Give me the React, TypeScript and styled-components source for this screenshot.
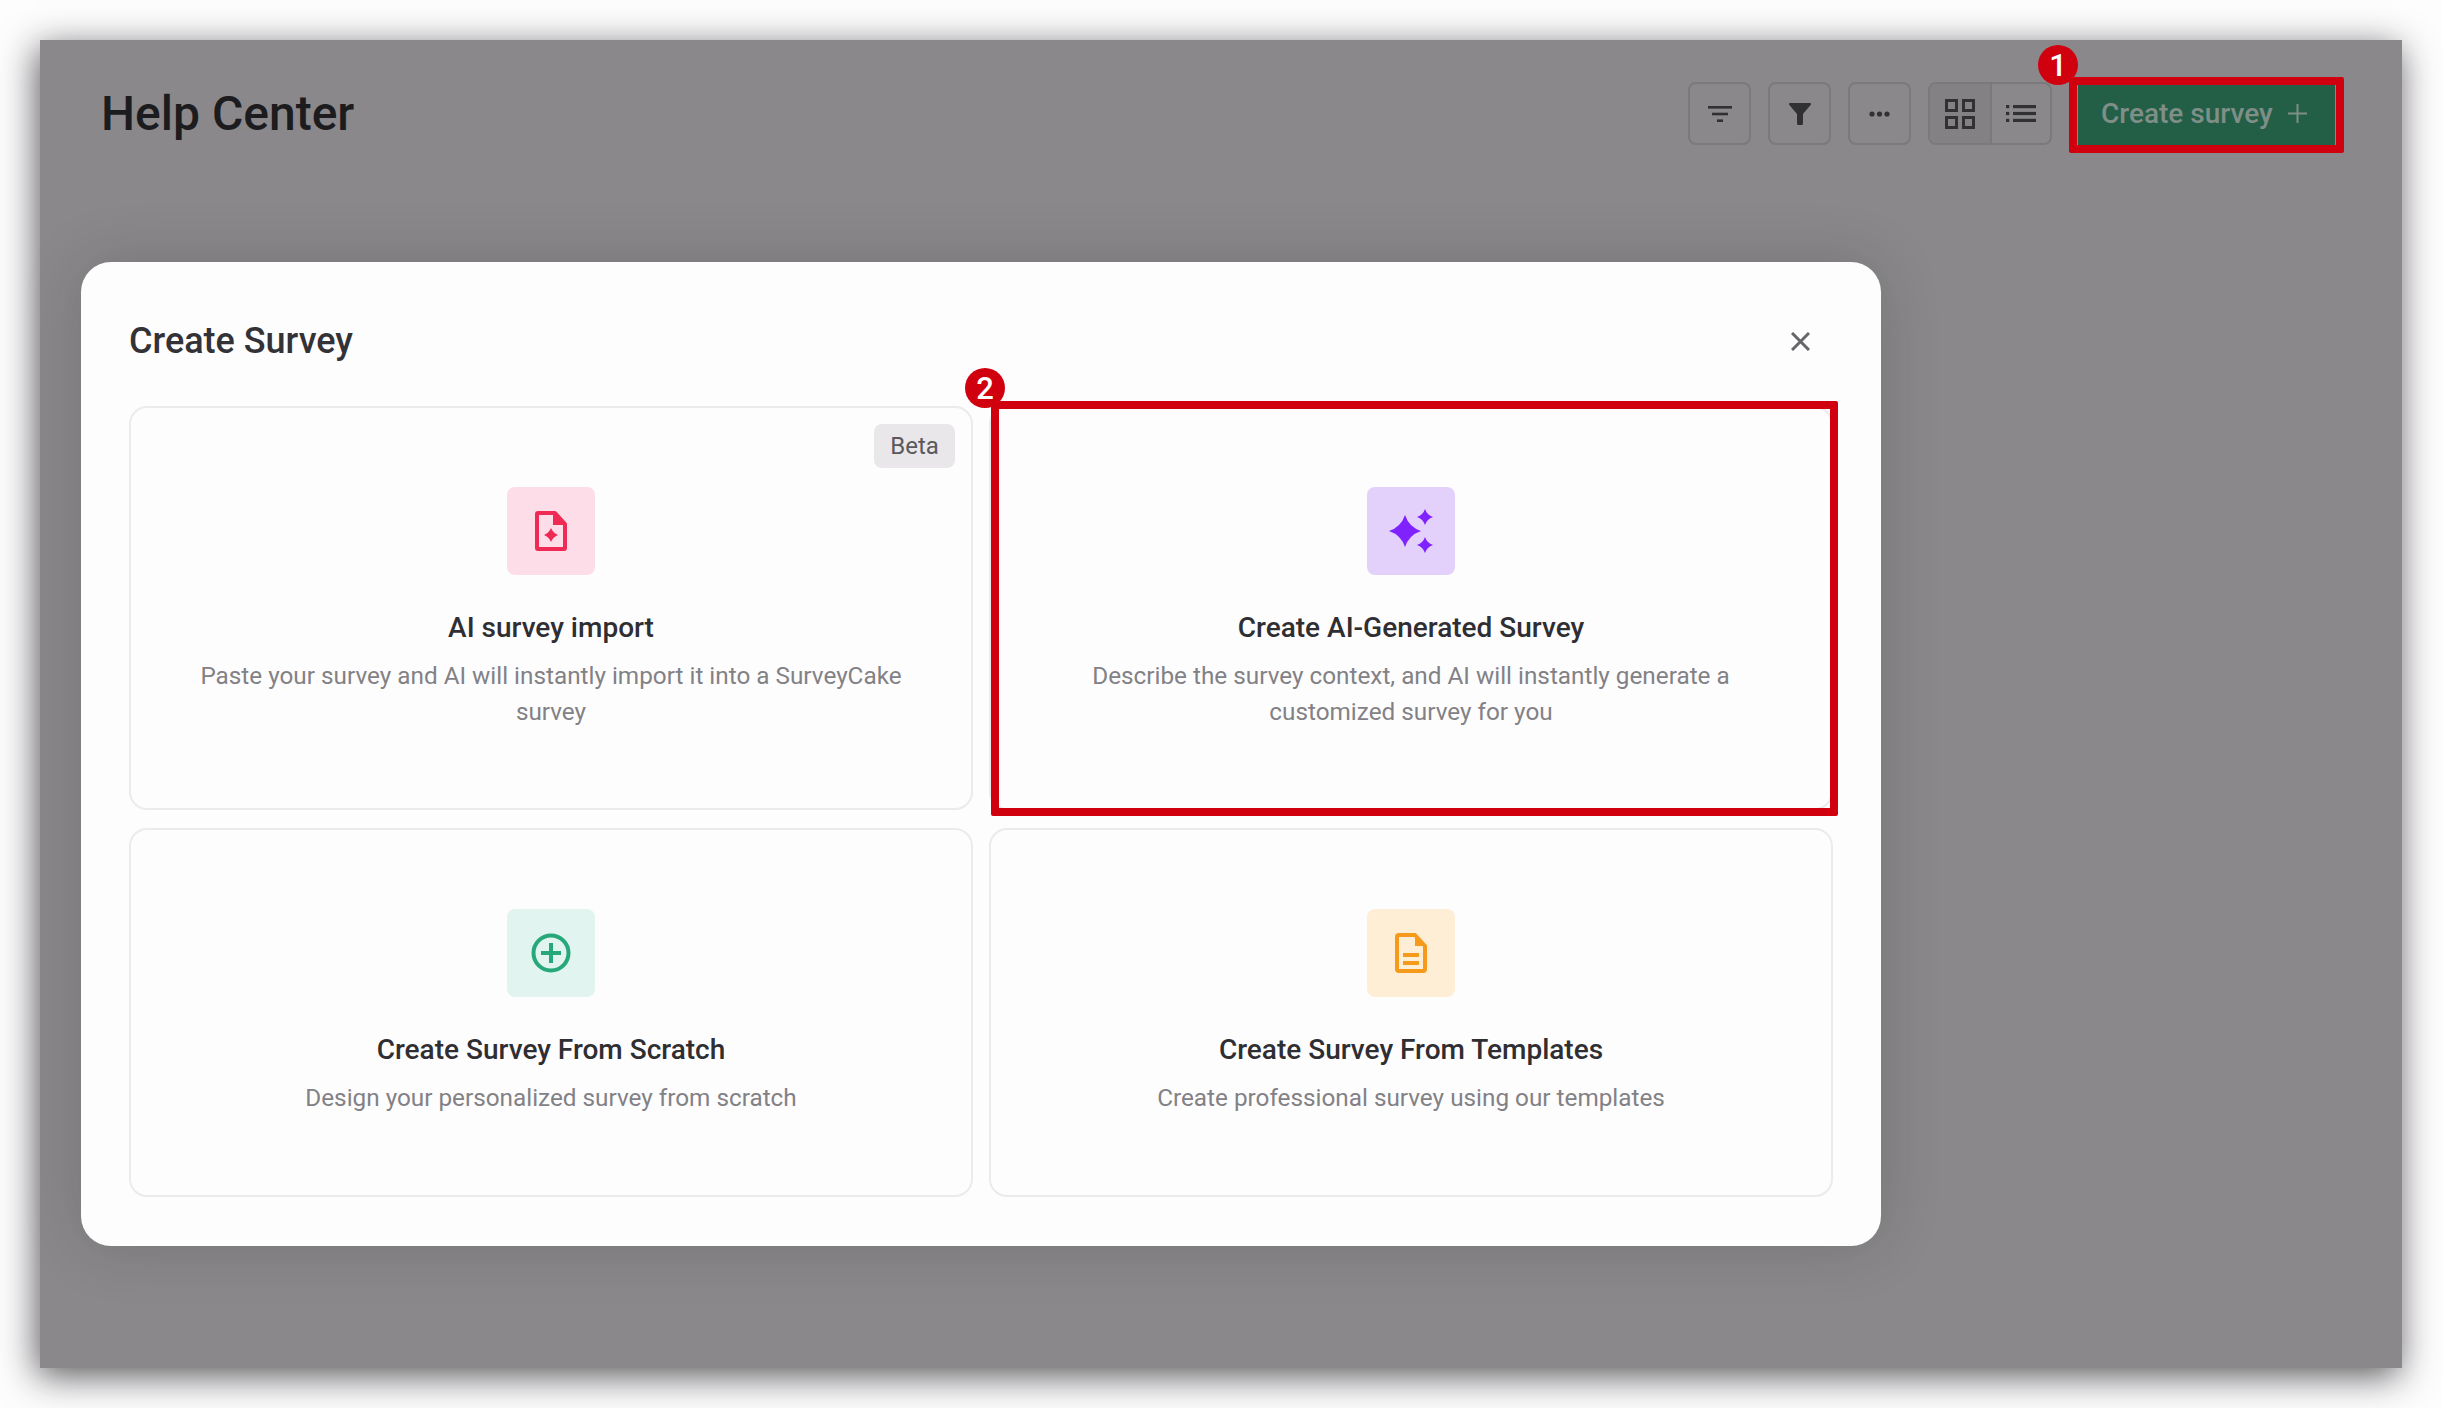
import React from "react";
import styled, { createGlobalStyle } from "styled-components";

const GlobalStyle = createGlobalStyle`
  html, body {
    margin: 0;
    padding: 0;
    background: #fefdfe;
  }
  body {
    font-family: Roboto, "Liberation Sans", sans-serif;
    overflow: hidden;
  }
`;

const Page = styled.div`
  width: 2442px;
  height: 1408px;
  padding: 40px;
  box-sizing: border-box;
`;

const Frame = styled.div`
  position: relative;
  width: 2362px;
  height: 1328px;
  background: #8a888a;
  box-shadow: -3px 8px 34px rgba(20, 18, 22, 0.7);
`;

const Header = styled.header`
  display: flex;
  align-items: center;
  justify-content: space-between;
  padding: 42px 67px 0 61px;
`;

const PageTitle = styled.h1`
  margin: 0;
  font-size: 48px;
  line-height: 63px;
  font-weight: 500;
  color: #1c1b1e;
`;

const Actions = styled.div`
  display: flex;
  align-items: center;
  gap: 17px;
`;

const ToolButton = styled.button`
  display: flex;
  flex: none;
  align-items: center;
  justify-content: center;
  width: 63px;
  height: 63px;
  padding: 0;
  background: transparent;
  border: 2px solid #7b797b;
  border-radius: 8px;
  color: #313033;
`;

const ToggleGroup = styled.div`
  display: flex;
  flex: none;
  height: 63px;
  border: 2px solid #7b797b;
  border-radius: 8px;
  box-sizing: border-box;
  overflow: hidden;
`;

const ToggleButton = styled.button<{ $active?: boolean }>`
  display: flex;
  align-items: center;
  justify-content: center;
  width: 60px;
  padding: 0;
  border: none;
  background: ${(p) => (p.$active ? "#838183" : "transparent")};
  color: #313033;

  & + & {
    border-left: 2px solid #7b797b;
  }
`;

const CreateWrap = styled.div`
  position: relative;
  flex: none;
  margin-left: 9px;
`;

const CreateButton = styled.button`
  display: flex;
  align-items: center;
  justify-content: space-between;
  height: 63px;
  width: 257px;
  padding: 0 28px 0 23px;
  box-sizing: border-box;
  border: none;
  background: #235f47;
  color: #7f8e87;
  font-family: inherit;
  font-size: 28px;
  font-weight: 500;
`;

const Highlight = styled.div<{ $inset: string }>`
  position: absolute;
  inset: ${(p) => p.$inset};
  border: 8px solid #d1000f;
  border-radius: 2px;
  pointer-events: none;
`;

const StepBadge = styled.span<{ $top: number; $left: number }>`
  position: absolute;
  top: ${(p) => p.$top}px;
  left: ${(p) => p.$left}px;
  display: flex;
  align-items: center;
  justify-content: center;
  width: 40px;
  height: 40px;
  border-radius: 50%;
  background: #d1000f;
  color: #fff;
  font-size: 31px;
  font-weight: 500;
  z-index: 2;
`;

const Modal = styled.section`
  position: absolute;
  top: 222px;
  left: 41px;
  width: 1800px;
  height: 984px;
  box-sizing: border-box;
  padding: 0 49px 49px 48px;
  background: #fefdfe;
  border-radius: 30px;
  box-shadow: 0 0 60px rgba(30, 28, 32, 0.18);
`;

const ModalHead = styled.div`
  display: flex;
  align-items: center;
  justify-content: space-between;
  height: 144px;
  padding: 14px 22px 0 0;
  box-sizing: border-box;
`;

const ModalTitle = styled.h2`
  margin: 0;
  font-size: 36px;
  font-weight: 500;
  color: #333237;
`;

const CloseButton = styled.button`
  display: flex;
  padding: 0;
  border: none;
  background: none;
  color: #666569;
`;

const CardGrid = styled.div`
  display: grid;
  grid-template-columns: 844px 844px;
  grid-template-rows: 404px 369px;
  gap: 18px 16px;
`;

const Card = styled.div`
  position: relative;
  display: flex;
  flex-direction: column;
  align-items: center;
  box-sizing: border-box;
  padding: 79px 60px 0;
  border: 2px solid #eceaed;
  border-radius: 18px;
  text-align: center;
`;

const BetaTag = styled.span`
  position: absolute;
  top: 16px;
  right: 16px;
  display: flex;
  align-items: center;
  justify-content: center;
  width: 81px;
  height: 44px;
  border-radius: 8px;
  background: #e9e7ea;
  color: #5a595d;
  font-size: 24px;
`;

const IconTile = styled.div<{ $bg: string; $fg: string }>`
  display: flex;
  align-items: center;
  justify-content: center;
  width: 88px;
  height: 88px;
  border-radius: 8px;
  background: ${(p) => p.$bg};
  color: ${(p) => p.$fg};
`;

const CardTitle = styled.h3`
  margin: 33px 0 0;
  font-size: 28px;
  line-height: 40px;
  font-weight: 500;
  color: #2f2e32;
`;

const CardText = styled.p`
  margin: 10px 0 0;
  font-size: 24.3px;
  line-height: 36px;
  font-weight: 400;
  color: #828185;
`;

const FilterIcon = () => (
  <svg width="24" height="16" viewBox="0 0 24 16" fill="currentColor">
    <rect x="0" y="0" width="24" height="2.6" />
    <rect x="4" y="6.7" width="16" height="2.6" />
    <rect x="9" y="13.4" width="6" height="2.6" />
  </svg>
);

const FunnelIcon = () => (
  <svg width="22" height="22" viewBox="0 0 22 22" fill="currentColor">
    <path d="M1 0H21C22 0 22.4 1 21.8 1.8L14 11V20.5C14 21.4 13.4 22 12.5 22H9.5C8.6 22 8 21.4 8 20.5V11L0.2 1.8C-0.4 1 0 0 1 0Z" />
  </svg>
);

const DotsIcon = () => (
  <svg width="21" height="6" viewBox="0 0 21 6" fill="currentColor">
    <circle cx="3" cy="3" r="2.6" />
    <circle cx="10.5" cy="3" r="2.6" />
    <circle cx="18" cy="3" r="2.6" />
  </svg>
);

const GridIcon = () => (
  <svg width="30" height="30" viewBox="0 0 30 30" fill="none" stroke="currentColor" strokeWidth="3">
    <rect x="1.5" y="1.5" width="10" height="10" />
    <rect x="18.5" y="1.5" width="10" height="10" />
    <rect x="1.5" y="18.5" width="10" height="10" />
    <rect x="18.5" y="18.5" width="10" height="10" />
  </svg>
);

const ListIcon = () => (
  <svg width="30" height="17" viewBox="0 0 30 17" fill="currentColor">
    <rect x="0" y="0" width="3.3" height="3.2" />
    <rect x="7" y="0" width="23" height="3.2" />
    <rect x="0" y="6.9" width="3.3" height="3.2" />
    <rect x="7" y="6.9" width="23" height="3.2" />
    <rect x="0" y="13.8" width="3.3" height="3.2" />
    <rect x="7" y="13.8" width="23" height="3.2" />
  </svg>
);

const PlusIcon = () => (
  <svg width="19" height="19" viewBox="0 0 19 19" stroke="currentColor" strokeWidth="2">
    <path d="M9.5 0V19M0 9.5H19" />
  </svg>
);

const CloseIcon = () => (
  <svg width="19" height="19" viewBox="0 0 19 19" stroke="currentColor" strokeWidth="3" fill="none">
    <path d="M1 1L18 18M18 1L1 18" />
  </svg>
);

const FileSparkIcon = () => (
  <svg width="32" height="40" viewBox="0 0 32 40" fill="none">
    <path d="M3 2H20L30 13V37C30 37.6 29.6 38 29 38H3C2.4 38 2 37.6 2 37V3C2 2.4 2.4 2 3 2Z" stroke="currentColor" strokeWidth="4" strokeLinejoin="round" />
    <path d="M18 1L31 14H18Z" fill="currentColor" />
    <path d="M16 17Q18 22 23 24Q18 26 16 31Q14 26 9 24Q14 22 16 17Z" fill="currentColor" />
  </svg>
);

const SparklesIcon = () => (
  <svg width="48" height="48" viewBox="0 0 48 48" fill="currentColor">
    <path d="M18 8Q22 20 34 24Q22 28 18 40Q14 28 2 24Q14 20 18 8Z" />
    <path d="M38 2Q40 8 46 10Q40 12 38 18Q36 12 30 10Q36 8 38 2Z" />
    <path d="M38 30Q40 36 46 38Q40 40 38 46Q36 40 30 38Q36 36 38 30Z" />
  </svg>
);

const PlusCircleIcon = () => (
  <svg width="40" height="40" viewBox="0 0 40 40" fill="none" stroke="currentColor" strokeWidth="4">
    <circle cx="20" cy="20" r="17.5" />
    <path d="M20 10V30M10 20H30" />
  </svg>
);

const FileTextIcon = () => (
  <svg width="32" height="40" viewBox="0 0 32 40" fill="none">
    <path d="M4 2H20L30 13V36C30 37.1 29.1 38 28 38H4C2.9 38 2 37.1 2 36V4C2 2.9 2.9 2 4 2Z" stroke="currentColor" strokeWidth="4" strokeLinejoin="round" />
    <path d="M20 1L31 13H20Z" fill="currentColor" />
    <rect x="8" y="20" width="16" height="4" fill="currentColor" />
    <rect x="8" y="28" width="16" height="4" fill="currentColor" />
  </svg>
);

const App = () => {
  return (
    <Page>
      <GlobalStyle />
      <Frame>
        <Header>
          <PageTitle>Help Center</PageTitle>
          <Actions>
            <ToolButton>
              <FilterIcon />
            </ToolButton>
            <ToolButton>
              <FunnelIcon />
            </ToolButton>
            <ToolButton>
              <DotsIcon />
            </ToolButton>
            <ToggleGroup>
              <ToggleButton $active>
                <GridIcon />
              </ToggleButton>
              <ToggleButton>
                <ListIcon />
              </ToggleButton>
            </ToggleGroup>
            <CreateWrap>
              <CreateButton>
                Create survey
                <PlusIcon />
              </CreateButton>
              <Highlight $inset="-5px -9px -8px -9px" />
              <StepBadge $top={-37} $left={-40}>
                1
              </StepBadge>
            </CreateWrap>
          </Actions>
        </Header>
        <Modal>
          <ModalHead>
            <ModalTitle>Create Survey</ModalTitle>
            <CloseButton>
              <CloseIcon />
            </CloseButton>
          </ModalHead>
          <CardGrid>
            <Card>
              <BetaTag>Beta</BetaTag>
              <IconTile $bg="#fddde7" $fg="#ee2a55">
                <FileSparkIcon />
              </IconTile>
              <CardTitle>AI survey import</CardTitle>
              <CardText>
                Paste your survey and AI will instantly import it into a SurveyCake survey
              </CardText>
            </Card>
            <Card>
              <IconTile $bg="#e3d0fb" $fg="#7f22fe">
                <SparklesIcon />
              </IconTile>
              <CardTitle>Create AI-Generated Survey</CardTitle>
              <CardText>
                Describe the survey context, and AI will instantly generate a customized survey for you
              </CardText>
              <Highlight $inset="-7px -7px -8px 0" />
              <StepBadge $top={-40} $left={-26}>
                2
              </StepBadge>
            </Card>
            <Card>
              <IconTile $bg="#e1f4ef" $fg="#27a87b">
                <PlusCircleIcon />
              </IconTile>
              <CardTitle>Create Survey From Scratch</CardTitle>
              <CardText>Design your personalized survey from scratch</CardText>
            </Card>
            <Card>
              <IconTile $bg="#feeed6" $fg="#f59a1b">
                <FileTextIcon />
              </IconTile>
              <CardTitle>Create Survey From Templates</CardTitle>
              <CardText>Create professional survey using our templates</CardText>
            </Card>
          </CardGrid>
        </Modal>
      </Frame>
    </Page>
  );
};

export default App;
